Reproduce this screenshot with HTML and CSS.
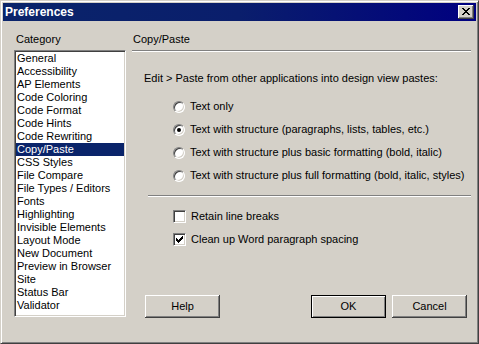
FILE: index.html
```html
<!DOCTYPE html>
<html lang="en">
<head>
<meta charset="utf-8">
<title>Preferences</title>
<link rel="stylesheet" href="styles.css">
</head>
<body>
<div class="window">
  <div class="titlebar">
    <span class="title">Preferences</span>
    <span class="close" aria-label="Close">
      <svg width="8" height="7" viewBox="0 0 8 7" shape-rendering="crispEdges"><path fill="#000" d="M0 0h2v1h-2z M6 0h2v1h-2z M1 1h2v1h-2z M5 1h2v1h-2z M2 2h4v1h-4z M3 3h2v1h-2z M2 4h4v1h-4z M1 5h2v1h-2z M5 5h2v1h-2z M0 6h2v1h-2z M6 6h2v1h-2z"/></svg>
    </span>
  </div>
  <div class="content">
    <div class="left">
      <div class="label">Category</div>
      <ul class="listbox">
        <li>General</li>
        <li>Accessibility</li>
        <li>AP Elements</li>
        <li>Code Coloring</li>
        <li>Code Format</li>
        <li>Code Hints</li>
        <li>Code Rewriting</li>
        <li class="selected">Copy/Paste</li>
        <li>CSS Styles</li>
        <li>File Compare</li>
        <li>File Types / Editors</li>
        <li>Fonts</li>
        <li>Highlighting</li>
        <li>Invisible Elements</li>
        <li>Layout Mode</li>
        <li>New Document</li>
        <li>Preview in Browser</li>
        <li>Site</li>
        <li>Status Bar</li>
        <li>Validator</li>
      </ul>
    </div>
    <div class="right">
      <div class="heading">Copy/Paste</div>
      <div class="etched"></div>
      <div class="intro">Edit &gt; Paste from other applications into design view pastes:</div>
      <div class="options">
        <div class="row"><span class="radio"></span><span>Text only</span></div>
        <div class="row"><span class="radio on"></span><span>Text with structure (paragraphs, lists, tables, etc.)</span></div>
        <div class="row"><span class="radio"></span><span>Text with structure plus basic formatting (bold, italic)</span></div>
        <div class="row"><span class="radio"></span><span>Text with structure plus full formatting (bold, italic, styles)</span></div>
      </div>
      <div class="etched sep2"></div>
      <div class="options checks">
        <div class="row"><span class="check"></span><span>Retain line breaks</span></div>
        <div class="row"><span class="check">
          <svg width="7" height="7" viewBox="0 0 7 7" shape-rendering="crispEdges"><path fill="#000" d="M0 2h1v3h-1z M1 3h1v3h-1z M2 4h1v3h-1z M3 3h1v3h-1z M4 2h1v3h-1z M5 1h1v3h-1z M6 0h1v3h-1z"/></svg>
        </span><span>Clean up Word paragraph spacing</span></div>
      </div>
      <div class="buttons">
        <span class="btn help">Help</span>
        <span class="btn default">OK</span>
        <span class="btn">Cancel</span>
      </div>
    </div>
  </div>
</div>
</body>
</html>
```

FILE: styles.css
```css
* { box-sizing: border-box; }
html, body { margin: 0; padding: 0; }
body {
  background: #d4d0c8;
  font-family: "Liberation Sans", Arial, sans-serif;
  font-size: 11px;
  line-height: 13px;
  color: #000;
}
.window {
  width: 479px;
  height: 344px;
  border: 1px solid;
  border-color: #d4d0c8 #404040 #404040 #d4d0c8;
  box-shadow: inset 1px 1px 0 #fff, inset -1px -1px 0 #808080;
  padding: 2px;
  background: #d4d0c8;
  display: flex;
  flex-direction: column;
}
.titlebar {
  height: 18px;
  flex: none;
  display: flex;
  align-items: center;
  padding: 0 2px 0 2px;
  background: linear-gradient(90deg, #0a246a 0%, #0a1e6c 50%, #000080 100%);
  color: #fff;
  font-weight: bold;
  font-size: 12px;
}
.title { line-height: 14px; }
.close {
  margin-left: auto;
  width: 16px;
  height: 14px;
  background: #d4d0c8;
  box-shadow: inset -1px -1px 0 #404040, inset 1px 1px 0 #fff, inset -2px -2px 0 #808080, inset 2px 2px 0 #d4d0c8;
  display: flex;
  align-items: flex-start;
  padding: 3px 0 0 4px;
}
.close svg { display: block; }
.content {
  flex: 1;
  display: flex;
  gap: 6px;
  padding: 12px 5px 0 11px;
}
.left {
  width: 112px;
  flex: none;
  display: flex;
  flex-direction: column;
}
.label {
  height: 13px;
  padding-left: 2px;
  margin-bottom: 4px;
}
.listbox {
  list-style: none;
  margin: 0;
  padding: 1px;
  height: 267px;
  background: #fff;
  border: 1px solid;
  border-color: #808080 #fff #fff #808080;
  box-shadow: inset 1px 1px 0 #404040, inset -1px -1px 0 #d4d0c8;
  overflow: hidden;
}
.listbox li {
  height: 13px;
  padding-left: 1px;
  white-space: nowrap;
}
.listbox li.selected {
  background: #0a246a;
  color: #fff;
}
.right {
  flex: 1;
  display: flex;
  flex-direction: column;
}
.heading {
  height: 13px;
  padding-left: 1px;
  margin-bottom: 4px;
}
.etched {
  height: 2px;
  border-top: 1px solid #808080;
  border-bottom: 1px solid #fff;
}
.intro {
  margin: 20px 0 0 12px;
  height: 13px;
  white-space: nowrap;
}
.options {
  margin: 15px 0 0 41px;
  display: flex;
  flex-direction: column;
  gap: 10px;
}
.row {
  height: 13px;
  display: flex;
  align-items: flex-start;
  gap: 5px;
  white-space: nowrap;
}
.radio {
  flex: none;
  width: 12px;
  height: 12px;
  margin-top: 1px;
  border-radius: 50%;
  background: #fff;
  border: 1px solid;
  border-color: #808080 #fff #fff #808080;
  box-shadow: inset 1px 1px 0 #404040, inset -1px -1px 0 #d4d0c8;
  position: relative;
}
.radio.on::after {
  content: "";
  position: absolute;
  left: 3px;
  top: 3px;
  width: 4px;
  height: 4px;
  border-radius: 50%;
  background: #000;
}
.sep2 { margin: 13px 0 0 16px; }
.checks { margin-top: 13px; }
.check {
  flex: none;
  width: 13px;
  height: 13px;
  background: #fff;
  border: 1px solid;
  border-color: #808080 #fff #fff #808080;
  box-shadow: inset 1px 1px 0 #404040, inset -1px -1px 0 #d4d0c8;
  padding: 2px 0 0 2px;
}
.check svg { display: block; }
.buttons {
  margin-top: 49px;
  display: flex;
  gap: 6px;
  padding: 0 4px 0 13px;
}
.btn {
  width: 75px;
  height: 23px;
  display: flex;
  align-items: center;
  justify-content: center;
  background: #d4d0c8;
  box-shadow: inset -1px -1px 0 #404040, inset 1px 1px 0 #fff, inset -2px -2px 0 #808080, inset 2px 2px 0 #d4d0c8;
}
.btn.help { margin-right: auto; }
.btn.default {
  border: 1px solid #000;
  box-shadow: inset 1px 1px 0 #fff, inset -1px -1px 0 #808080;
}
```
